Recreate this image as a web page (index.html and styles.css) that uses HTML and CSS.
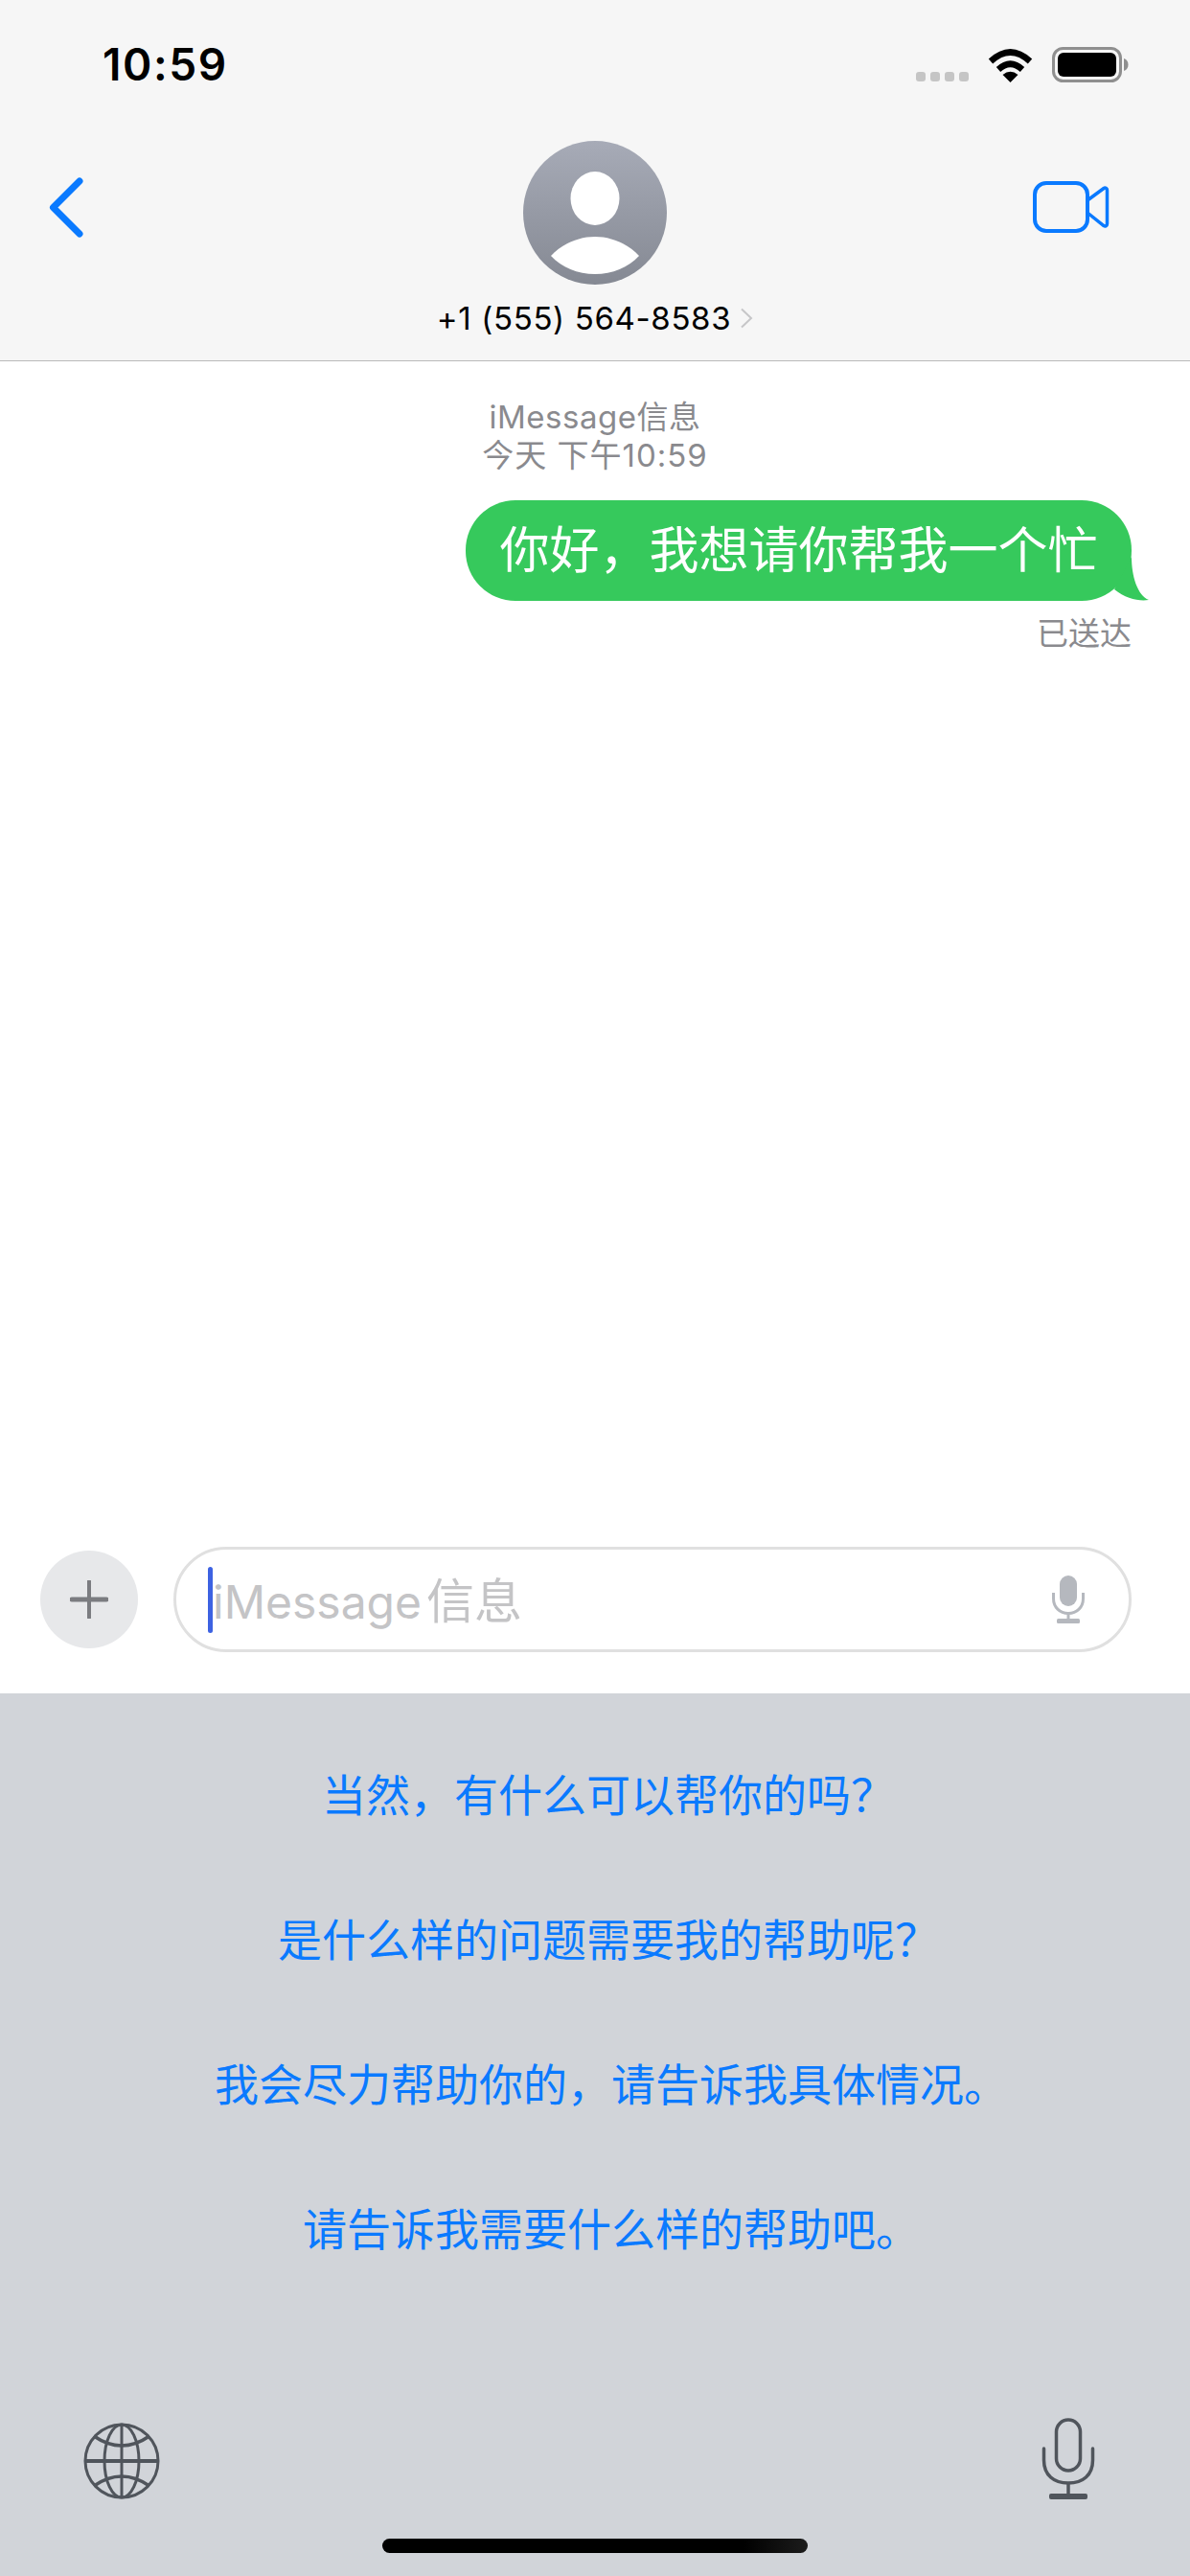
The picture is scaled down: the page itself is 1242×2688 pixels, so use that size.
FILE: index.html
```html
<!DOCTYPE html>
<html lang="zh">
<head>
  <meta charset="UTF-8" />
  <meta name="viewport" content="width=device-width, initial-scale=1.0" />
  <title>Messages</title>
  <link rel="stylesheet" href="styles.css">
</head>
<body>
  <div class="screen">
    <header class="header">
      <div class="status">
        <span class="time">10:59</span>
        <div class="status-icons">
          <div class="signal"><i></i><i></i><i></i><i></i></div>
          <svg class="wifi" width="47" height="36" viewBox="0 0 47 36">
            <path d="M3 14Q23.500 -5 44 14" fill="none" stroke="#000" stroke-width="6.500"/>
            <path d="M11 22.500Q23.500 11 36 22.500" fill="none" stroke="#000" stroke-width="6.500"/>
            <path d="M23.500 36L15.500 28Q23.500 21.500 31.500 28Z" fill="#000"/>
          </svg>
          <svg class="battery" width="80" height="37" viewBox="0 0 80 37">
            <rect x="1.500" y="1.500" width="70" height="34" rx="10" fill="none" stroke="#8f8f8f" stroke-width="3"/>
            <rect x="6" y="6" width="61" height="25" rx="6" fill="#000"/>
            <path d="M75 12C78 13 79.500 15.500 79.500 18.500C79.500 21.500 78 24 75 25Z" fill="#8f8f8f"/>
          </svg>
        </div>
      </div>
      <nav class="nav">
        <svg class="back" width="36" height="63" viewBox="0 0 36 63">
          <path d="M32 4L4.500 31.500L32 59" fill="none" stroke="#0a7aff" stroke-width="7" stroke-linecap="round" stroke-linejoin="round"/>
        </svg>
        <div class="contact">
          <svg class="avatar" width="150" height="150" viewBox="0 0 150 150">
            <defs>
              <linearGradient id="avatarGrad" x1="0" y1="0" x2="0" y2="1">
                <stop offset="0" stop-color="#a7abb7"/>
                <stop offset="1" stop-color="#858993"/>
              </linearGradient>
            </defs>
            <circle cx="75" cy="75" r="75" fill="url(#avatarGrad)"/>
            <ellipse cx="75" cy="60" rx="25.500" ry="28" fill="#fff"/>
            <path d="M29 120C40 108 57 100 75 100C93 100 110 108 121 120C110 132 93 139 75 139C57 139 40 132 29 120Z" fill="#fff"/>
          </svg>
          <div class="name">
            <span>+1 (555) 564-8583</span>
            <svg width="14" height="22" viewBox="0 0 14 22">
              <path d="M2 1.500L12 11L2 20.500" fill="none" stroke="#c6c6c8" stroke-width="2"/>
            </svg>
          </div>
        </div>
        <svg class="video" width="80" height="54" viewBox="0 0 80 54">
          <rect x="2" y="2" width="55" height="50" rx="12" fill="none" stroke="#0a7aff" stroke-width="4"/>
          <path d="M57 20L74 7.500C75.500 6.500 77.500 7.500 77.500 9.500V44.500C77.500 46.500 75.500 47.500 74 46.500L57 33" fill="none" stroke="#0a7aff" stroke-width="3.500"/>
        </svg>
      </nav>
    </header>

    <main class="messages">
      <div class="thread-info">iMessage信息<br><span class="thread-date">今天 下午10:59</span></div>
      <div class="bubble">
        你好，我想请你帮我一个忙
        <svg class="bubble-tail" width="36" height="46" viewBox="0 0 36 46">
          <path d="M18 0C18 20 24 40 36 45C26 46.500 12 44 0 34Z" fill="#36c95c"/>
        </svg>
      </div>
      <div class="delivered">已送达</div>
    </main>

    <section class="composer">
      <div class="add-btn">
        <svg width="40" height="40" viewBox="0 0 40 40">
          <path d="M20 1V39" stroke="#7b7c80" stroke-width="4" stroke-linecap="round"/>
          <path d="M2 20H38" stroke="#7b7c80" stroke-width="5" stroke-linecap="round"/>
        </svg>
      </div>
      <div class="input">
        <span class="caret"></span>
        <span class="placeholder">iMessage<span class="placeholder-cjk">信息</span></span>
        <svg class="input-mic" width="34" height="50" viewBox="0 0 34 50">
          <rect x="8" y="0" width="18" height="32" rx="9" fill="#b5b8be"/>
          <path d="M1.500 18V24C1.500 33 8 39.500 17 39.500C26 39.500 32.500 33 32.500 24V18" fill="none" stroke="#b5b8be" stroke-width="3"/>
          <path d="M17 39V47" stroke="#b5b8be" stroke-width="3"/>
          <rect x="5" y="45" width="24" height="5" rx="1.500" fill="#b5b8be"/>
        </svg>
      </div>
    </section>

    <section class="keyboard">
      <div class="suggestions">
        <div class="suggestion">当然，有什么可以帮你的吗<span class="end-q">？</span></div>
        <div class="suggestion">是什么样的问题需要我的帮助呢<span class="end-q">？</span></div>
        <div class="suggestion">我会尽力帮助你的，请告诉我具体情况<span class="end-dot">。</span></div>
        <div class="suggestion">请告诉我需要什么样的帮助吧<span class="end-dot">。</span></div>
      </div>
      <div class="kb-icons">
        <svg width="80" height="80" viewBox="0 0 80 80" fill="none" stroke="#50555c" stroke-width="3">
          <circle cx="40" cy="40" r="38"/>
          <ellipse cx="40" cy="40" rx="18" ry="38"/>
          <path d="M40 2V78"/>
          <path d="M2 40H78" stroke-width="4"/>
          <path d="M11 14Q40 34 69 14" stroke-width="3.500"/>
          <path d="M11 66Q40 46 69 66" stroke-width="3.500"/>
        </svg>
        <svg width="56" height="85" viewBox="0 0 56 85" fill="none" stroke="#50555c" stroke-width="3.500">
          <rect x="15.500" y="2" width="25" height="53" rx="12.500"/>
          <path d="M2.500 32V44C2.500 60 13 68 28 68C43 68 53.500 60 53.500 44V32" stroke-linecap="round"/>
          <path d="M28 68V80"/>
          <rect x="8" y="79" width="40" height="6" rx="2" fill="#50555c" stroke="none"/>
        </svg>
      </div>
      <div class="home-bar"></div>
    </section>
  </div>
</body>
</html>
```

FILE: styles.css
```css
body {
  margin: 0;
  background: #fff;
  font-family: Inter, "Noto Sans CJK SC", sans-serif;
}

.screen {
  width: 1242px;
  height: 2688px;
  display: flex;
  flex-direction: column;
  overflow: hidden;
}

.header {
  height: 376px;
  background: #f6f6f6;
  border-bottom: 1px solid #b9b9b9;
}

.status {
  height: 147px;
  box-sizing: border-box;
  padding: 40px 64px 0 107px;
  display: flex;
  justify-content: space-between;
  align-items: flex-start;
}

.time {
  font-size: 46px;
  line-height: 54px;
  font-weight: 600;
  letter-spacing: 1.6px;
  color: #000;
}

.status-icons {
  margin-top: 9px;
  display: flex;
  align-items: flex-end;
}

.signal {
  display: flex;
  gap: 5px;
  margin-right: 20px;
  margin-bottom: 1px;
}

.signal i {
  width: 10px;
  height: 10px;
  border-radius: 3px;
  background: #c5c5c5;
}

.wifi {
  margin-right: 20px;
}

.nav {
  display: grid;
  grid-template-columns: 1fr auto 1fr;
  padding: 0 84px 0 84px;
}

.back {
  margin: 38px 0 0 -33px;
}

.video {
  margin-top: 42px;
  justify-self: end;
}

.contact {
  display: flex;
  flex-direction: column;
  align-items: center;
}

.name {
  margin-top: 15px;
  display: flex;
  align-items: center;
  gap: 9px;
  font-size: 33px;
  line-height: 40px;
  letter-spacing: 0.65px;
  color: #000;
}

.messages {
  flex: 1;
  padding: 38px 61px 0 0;
  display: flex;
  flex-direction: column;
  align-items: flex-end;
}

.thread-info {
  align-self: stretch;
  margin-right: -61px;
  text-align: center;
  font-size: 33px;
  line-height: 40px;
  letter-spacing: 0.5px;
  color: #8a8a8e;
}

.thread-date {
  letter-spacing: 1px;
}

.bubble {
  position: relative;
  margin-top: 27px;
  height: 105px;
  padding: 0 35.5px;
  border-radius: 52px;
  background: #36c95c;
  color: #fff;
  font-size: 52px;
  line-height: 105px;
}

.bubble-tail {
  position: absolute;
  right: -18px;
  bottom: 0;
}

.delivered {
  margin-top: 14px;
  font-size: 33px;
  line-height: 40px;
  color: #8a8a8e;
}

.composer {
  display: flex;
  align-items: center;
  gap: 37px;
  padding: 0 61px 43px 42px;
}

.add-btn {
  flex: none;
  width: 102px;
  height: 102px;
  border-radius: 50%;
  background: #e7e8ea;
  display: flex;
  align-items: center;
  justify-content: center;
}

.input {
  flex: 1;
  height: 110px;
  box-sizing: border-box;
  border: 3px solid #e0e0e0;
  border-radius: 55px;
  padding: 0 46px 0 33px;
  display: flex;
  align-items: center;
}

.caret {
  width: 5px;
  height: 69px;
  border-radius: 3px;
  background: #3d62e2;
}

.placeholder {
  flex: 1;
  margin-bottom: 4px;
  font-size: 48px;
  color: #c4c4c6;
}

.placeholder-cjk {
  margin-left: 5px;
  font-size: 50px;
}

.keyboard {
  flex: none;
  height: 921px;
  box-sizing: border-box;
  padding: 31px 0 24px;
  background: #d1d4d9;
  display: flex;
  flex-direction: column;
}

.suggestion {
  height: 151px;
  line-height: 151px;
  text-align: center;
  font-size: 46px;
  color: #0a7aff;
}

/* trailing punctuation is narrow in the reference, line centring depends on it */
.end-q,
.end-dot {
  display: inline-block;
  text-align: left;
}

.end-q {
  width: 18px;
}

.end-dot {
  width: 12px;
}

.kb-icons {
  margin-top: auto;
  padding: 0 99px 0 87px;
  display: flex;
  justify-content: space-between;
  align-items: flex-end;
}

.home-bar {
  margin: 41px auto 0;
  width: 444px;
  height: 15px;
  border-radius: 8px;
  background: linear-gradient(90deg, #000 85%, #1c1c1c);
}
```
